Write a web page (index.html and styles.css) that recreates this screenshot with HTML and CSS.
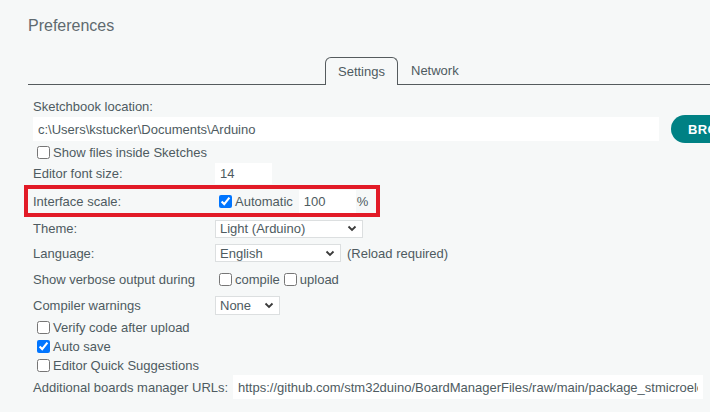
FILE: index.html
```html
<!DOCTYPE html>
<html>
<head>
<meta charset="utf-8">
<link rel="stylesheet" href="styles.css">
</head>
<body>
<div class="dialog">
  <h1 class="title">Preferences</h1>
  <div class="tabs">
    <div class="tab-line lead"></div>
    <div class="tab active">Settings</div>
    <div class="tab-line rest"><span class="tab">Network</span></div>
  </div>
  <div class="content">
    <div class="row label-row">Sketchbook location:</div>
    <div class="row path-row">
      <input class="text path" value="c:\Users\kstucker\Documents\Arduino">
      <button class="browse">BROWSE</button>
    </div>
    <label class="row check-row"><input type="checkbox">Show files inside Sketches</label>
    <div class="row field-row r-font">
      <span class="lbl">Editor font size:</span>
      <input class="text small" value="14">
    </div>
    <div class="row field-row r-scale highlight">
      <span class="lbl">Interface scale:</span>
      <label class="inline"><input type="checkbox" checked>Automatic</label>
      <input class="text small scale" value="100">
      <span class="pct">%</span>
    </div>
    <div class="row field-row r-theme">
      <span class="lbl">Theme:</span>
      <div class="select w-theme"><span>Light (Arduino)</span><svg class="chev" width="10" height="7" viewBox="0 0 10 7"><path d="M1.5 1.5l3.5 3.5 3.5-3.5" fill="none" stroke="#3a3a3a" stroke-width="1.8"/></svg></div>
    </div>
    <div class="row field-row r-mid">
      <span class="lbl">Language:</span>
      <div class="select w-lang"><span>English</span><svg class="chev" width="10" height="7" viewBox="0 0 10 7"><path d="M1.5 1.5l3.5 3.5 3.5-3.5" fill="none" stroke="#3a3a3a" stroke-width="1.8"/></svg></div>
      <span class="note">(Reload required)</span>
    </div>
    <div class="row field-row r-mid">
      <span class="lbl">Show verbose output during</span>
      <label class="inline"><input type="checkbox">compile</label>
      <label class="inline"><input type="checkbox">upload</label>
    </div>
    <div class="row field-row r-mid">
      <span class="lbl">Compiler warnings</span>
      <div class="select w-warn"><span>None</span><svg class="chev" width="10" height="7" viewBox="0 0 10 7"><path d="M1.5 1.5l3.5 3.5 3.5-3.5" fill="none" stroke="#3a3a3a" stroke-width="1.8"/></svg></div>
    </div>
    <label class="row check-row tight"><input type="checkbox">Verify code after upload</label>
    <label class="row check-row tight"><input type="checkbox" checked>Auto save</label>
    <label class="row check-row tight"><input type="checkbox">Editor Quick Suggestions</label>
    <div class="row field-row r-urls">
      <span class="lbl urls-lbl">Additional boards manager URLs:</span>
      <input class="text urls" value="https://github.com/stm32duino/BoardManagerFiles/raw/main/package_stmicroelectronics_index.json">
    </div>
  </div>
</div>
</body>
</html>
```

FILE: styles.css
```css
html, body {
  margin: 0;
  padding: 0;
  background: #f6f8f8;
  overflow: hidden;
}

body {
  font-family: "Liberation Sans", Arial, sans-serif;
  font-size: 13px;
  color: #4e5b61;
}

.dialog {
  width: 710px;
  height: 412px;
  overflow: hidden;
}

.title {
  margin: 0;
  padding: 16px 0 0 28px;
  height: 57px;
  box-sizing: border-box;
  font-size: 16px;
  font-weight: normal;
  line-height: 20px;
  color: #5f6a6f;
}

.tabs {
  display: flex;
  align-items: flex-end;
  margin-left: 28px;
  height: 28px;
}

.tab-line {
  height: 100%;
  border-bottom: 1px solid #555b5e;
  box-sizing: border-box;
}

.tab-line.lead {
  width: 297px;
  flex: none;
}

.tab-line.rest {
  flex: 1;
  display: flex;
  align-items: center;
}

.tab {
  line-height: 27px;
  color: #4e5b61;
}

.tab.active {
  width: 73px;
  height: 28px;
  flex: none;
  box-sizing: border-box;
  border: 1px solid #555b5e;
  border-bottom: none;
  border-radius: 6px 6px 0 0;
  text-align: center;
}

.rest .tab {
  padding-left: 13px;
}

.content {
  padding-left: 33px;
}

.row {
  display: flex;
  align-items: center;
}

.label-row {
  margin-top: 12px;
  height: 18px;
}

.path-row {
  height: 28px;
}

input.text {
  border: none;
  outline: none;
  background: #ffffff;
  font-family: inherit;
  font-size: 13px;
  color: #4e5b61;
  padding: 0 5px;
  margin: 0;
  box-sizing: border-box;
  flex: none;
}

.path {
  width: 626px;
  height: 24px;
}

.browse {
  margin-left: 12px;
  height: 28px;
  padding: 0 17px;
  border: none;
  border-radius: 14px;
  background: #008184;
  color: #ffffff;
  font-family: inherit;
  font-weight: bold;
  font-size: 13px;
  letter-spacing: 0.4px;
  flex: none;
}

.check-row {
  height: 18px;
}

.check-row.tight {
  height: 19px;
}

input[type="checkbox"] {
  width: 13px;
  height: 13px;
  margin: 3px 3px 3px 4px;
  flex: none;
}

.field-row .lbl {
  width: 182px;
  flex: none;
}

.r-font {
  height: 24px;
}

.small {
  width: 57px;
  height: 21px;
}

.r-scale {
  height: 32px;
}

.inline {
  display: flex;
  align-items: center;
}

.scale {
  margin-left: 6px !important;
  height: 23px;
}

.pct {
  margin-left: 1px;
}

.highlight {
  position: relative;
}

.highlight::after {
  content: "";
  position: absolute;
  left: -9px;
  top: 0;
  width: 356px;
  height: 32px;
  box-sizing: border-box;
  border: 4px solid #e21b27;
  pointer-events: none;
}

.r-theme {
  height: 23px;
}

.r-mid {
  height: 26px;
}

.select {
  display: flex;
  align-items: center;
  justify-content: space-between;
  height: 18px;
  box-sizing: border-box;
  border: 1px solid #dcdfe0;
  background: #ffffff;
  padding: 0 5px 0 4px;
}

.w-theme { width: 148px; }
.w-lang { width: 126px; }
.w-warn { width: 65px; height: 19px; }

.chev {
  flex: none;
}

.note {
  margin-left: 6px;
}

.r-urls {
  height: 24px;
}

.urls-lbl {
  width: 200px !important;
}

.urls {
  width: 470px;
  height: 24px;
}
```
